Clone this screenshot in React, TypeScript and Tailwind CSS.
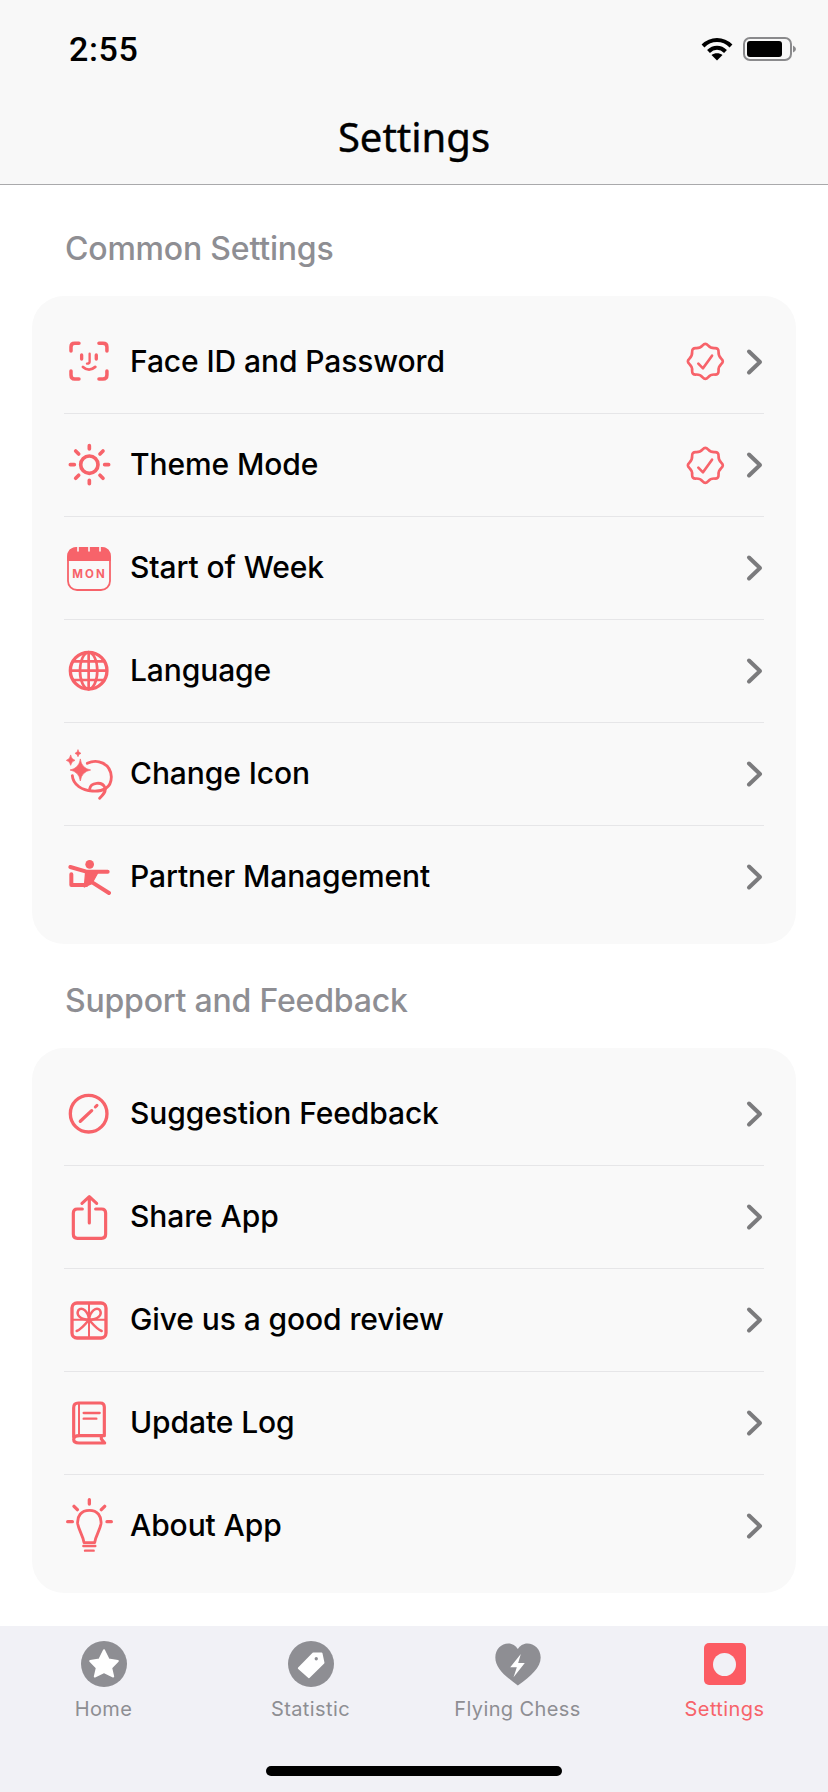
import React from "react";

const RED = "#f7636a";

function Z({ box, w, h, children }: { box: string; w: number; h: number; children: React.ReactNode }) {
  return (
    <svg width={w} height={h} viewBox={box} fill="none" stroke={RED} strokeLinecap="round" strokeLinejoin="round" className="shrink-0">
      {children}
    </svg>
  );
}

const FaceIcon = () => (
  <Z box="55 68 125 122" w={41.6} h={40.6}>
    <path strokeWidth="10.5" d="M64 98V86Q64 75 75 75H88M148 75H160Q172 75 172 86V98M172 158V170Q172 182 160 182H148M88 182H75Q64 182 64 170V158" />
    <path strokeWidth="10" d="M96 110V122M140 110V122" />
    <path d="M120 106V130Q120 136 112 136" strokeWidth="7" />
    <path d="M100 146Q118 162 137 146" strokeWidth="8.5" />
  </Z>
);

const SunIcon = () => (
  <Z box="50 370 135 130" w={45} h={43.3}>
    <g strokeWidth="11">
      <circle cx="117" cy="435" r="26" />
      <path d="M117 378V388M117 482V492M60 435H72M163 435H175M76 394L85 403M158 394L149 403M76 476L85 467M158 476L149 467" />
    </g>
  </Z>
);

const CalendarIcon = () => (
  <svg width={44} height={46} viewBox="0 0 44 46" className="shrink-0">
    <rect x="1" y="3" width="42" height="42" rx="9" fill="none" stroke={RED} strokeWidth="1.8" />
    <path d="M1 15V12Q1 3 10 3H34Q43 3 43 12V15Z" fill={RED} stroke={RED} strokeWidth="1.8" />
    <path d="M11 1V6M22 1V6M33 1V6" stroke="#f9f9f9" strokeWidth="1.6" strokeLinecap="round" />
    <text x="22.5" y="33" textAnchor="middle" fill={RED} fontSize="11.5" fontWeight="700" letterSpacing="2" fontFamily="Inter, sans-serif">MON</text>
  </svg>
);

const GlobeIcon = () => (
  <Z box="52 58 130 130" w={43.3} h={43.3}>
    <g strokeWidth="8">
      <circle cx="117" cy="123" r="55" strokeWidth="10" />
      <ellipse cx="117" cy="123" rx="26" ry="55" />
      <path d="M117 67V179M64 123H170M74 95H160M74 151H160" />
    </g>
  </Z>
);

const ChangeIcon = () => (
  <Z box="38 362 145 153" w={48.3} h={51}>
    <path d="M105 405C135 390 175 405 177 445C178 480 150 490 120 488C90 486 62 470 60 442" strokeWidth="8.5" />
    <path d="M112 482C115 462 150 458 158 478C162 490 152 500 142 510" strokeWidth="8.5" />
    <g fill={RED} stroke={RED} strokeWidth="2">
      <path d="M84 393Q88 420 115 425Q88 430 84 458Q80 430 53 425Q80 420 84 393Z" />
      <path d="M55 381Q57 393 68 396Q57 399 55 411Q53 399 42 396Q53 393 55 381Z" />
      <path d="M77 365Q78 373 86 375Q78 377 77 385Q76 377 68 375Q76 373 77 365Z" />
    </g>
  </Z>
);

const PartnerIcon = () => (
  <Z box="50 684 132 110" w={44} h={36.7}>
    <circle cx="118" cy="700" r="13" fill={RED} stroke="none" />
    <path d="M60 708L108 722H172" strokeWidth="12" />
    <path d="M106 722L142 726L124 758L102 768Z" fill={RED} stroke={RED} strokeWidth="4" />
    <path d="M63 730V762H108" strokeWidth="12" />
    <path d="M122 752L176 786" strokeWidth="12" />
  </Z>
);

const PencilIcon = () => (
  <Z box="52 40 130 130" w={43.3} h={43.3}>
    <circle cx="117" cy="105" r="55" strokeWidth="10" />
    <path d="M92 128L126 96" strokeWidth="10" />
    <path d="M137 85L142 80" strokeWidth="9" />
  </Z>
);

const ShareIcon = () => (
  <Z box="60 350 115 140" w={38.3} h={46.7}>
    <g strokeWidth="9.5">
      <path d="M97 395H82Q70 395 70 407V471Q70 483 82 483H155Q167 483 167 471V407Q167 395 155 395H137" />
      <path d="M118 437V360M96 378L118 358L140 378" />
    </g>
  </Z>
);

const GiftIcon = () => (
  <Z box="60 94 114 117" w={38} h={39}>
    <rect x="66" y="100" width="102" height="105" rx="15" strokeWidth="10" />
    <path d="M117 100V205M66 150H168" strokeWidth="6" />
    <path d="M117 150C90 150 78 135 85 122C95 108 115 125 117 150C120 125 140 108 150 122C157 135 145 150 117 150Z" strokeWidth="7.5" />
    <path d="M117 150C105 165 95 178 80 184M117 150C130 165 140 178 155 184" strokeWidth="7.5" />
  </Z>
);

const BookIcon = () => (
  <Z box="64 396 108 132" w={36} h={44}>
    <path strokeWidth="9.5" d="M72 505V416Q72 402 86 402H152Q164 402 164 414V500H90Q72 500 72 511Q72 522 88 522H165L155 510V500" />
    <path d="M88 402V498" strokeWidth="6" />
    <path d="M102 432H150M102 449H140" strokeWidth="7" />
  </Z>
);

const BulbIcon = () => (
  <Z box="44 688 146 166" w={48.7} h={55.3}>
    <path strokeWidth="10" d="M117 693V706M71 713L81 723M163 713L153 723M52 759H66M170 759H183" />
    <path d="M117 725C92 725 80 743 82 765C85 785 98 800 101 822H133C136 800 149 785 152 765C154 743 142 725 117 725Z" strokeWidth="8.5" />
    <path d="M99 832H135" strokeWidth="7" />
    <path d="M104 846H130" strokeWidth="7" />
  </Z>
);

function starPath() {
  const pts: [number, number][] = [];
  for (let i = 0; i < 16; i++) {
    const a = (i * Math.PI) / 8 - Math.PI / 2;
    const r = i % 2 === 0 ? 57 : 42;
    pts.push([133 + r * Math.cos(a), 97 + r * Math.sin(a)]);
  }
  let d = "";
  for (let i = 0; i < 16; i++) {
    const p = pts[i];
    const n = pts[(i + 1) % 16];
    const mx = (p[0] + n[0]) / 2;
    const my = (p[1] + n[1]) / 2;
    if (i === 0) d += `M${mx.toFixed(1)} ${my.toFixed(1)}`;
    else d += `Q${p[0].toFixed(1)} ${p[1].toFixed(1)} ${mx.toFixed(1)} ${my.toFixed(1)}`;
  }
  const p0 = pts[0];
  const m0 = [(p0[0] + pts[1][0]) / 2, (p0[1] + pts[1][1]) / 2];
  return `${d}Q${p0[0].toFixed(1)} ${p0[1].toFixed(1)} ${m0[0].toFixed(1)} ${m0[1].toFixed(1)}Z`;
}

const Badge = () => (
  <Z box="72 36 122 122" w={40.7} h={40.7}>
    <path d={starPath()} strokeWidth="8" />
    <path d="M112 104L126 118L153 80" strokeWidth="8" />
  </Z>
);

const Chevron = () => (
  <svg width={20} height={30} viewBox="0 0 20 30" fill="none" stroke="#7b7b7d" strokeWidth="4" strokeLinecap="round" strokeLinejoin="round" className="shrink-0">
    <path d="M5 4.5L16 15L5 25.5" />
  </svg>
);

function Row({ icon, label, badge, first }: { icon: React.ReactNode; label: string; badge?: boolean; first?: boolean }) {
  return (
    <div className={`flex h-[103px] items-center ${first ? "" : "border-t border-[#e6e6e8]"}`}>
      <div className="flex w-[50px] justify-center">{icon}</div>
      <span className="ml-[16px] flex-1 pb-[2px] text-[30px] font-medium leading-none tracking-[-0.1px] text-black">{label}</span>
      {badge && <div className="mr-[18px]"><Badge /></div>}
      <Chevron />
    </div>
  );
}

const Title = ({ children }: { children: React.ReactNode }) => (
  <div className="pl-[65px] text-[32px] font-medium leading-[36px] tracking-[-0.2px] text-[#8e8e93]">{children}</div>
);

const Card = ({ children }: { children: React.ReactNode }) => (
  <div className="mx-[32px] mt-[29px] rounded-[32px] bg-[#f9f9f9] px-[32px] pb-[16px] pt-[14px]">{children}</div>
);

function Tab({ icon, label, active }: { icon: React.ReactNode; label: string; active?: boolean }) {
  return (
    <div className="flex flex-col items-center">
      <div className="flex h-[46px] items-center justify-center">{icon}</div>
      <span className={`mt-[10px] text-[20px] font-normal leading-[24px] tracking-[0.4px] ${active ? "text-[#f7636a]" : "text-[#8e8e93]"}`}>{label}</span>
    </div>
  );
}

export default function App() {
  return (
    <div className="flex h-[1792px] w-[828px] flex-col overflow-hidden bg-white font-['Inter',sans-serif]">
      <header className="h-[185px] shrink-0 border-b border-[#a9a9ab] bg-[#f8f8f8]">
        <div className="flex h-[98px] items-center justify-between pl-[69px] pr-[32px]">
          <span className="font-['Roboto',sans-serif] text-[34px] font-medium leading-none tracking-[0.6px] text-black">2:55</span>
          <div className="flex items-center gap-[10px]">
            <svg width={32} height={24} viewBox="0 0 32 24" className="shrink-0" fill="none" stroke="#000" strokeWidth="4">
              <path d="M2 9C10 1 22 1 30 9" />
              <path d="M7.5 14.5C12.5 9.5 19.5 9.5 24.5 14.5" />
              <path d="M16 23.5L10.5 18C13.5 15.5 18.5 15.5 21.5 18Z" fill="#000" stroke="none" />
            </svg>
            <svg width={53} height={24} viewBox="0 0 53 24" className="shrink-0">
              <rect x="1" y="1" width="47" height="22" rx="6" fill="none" stroke="#8a8a8c" strokeWidth="2" />
              <rect x="4" y="4" width="35" height="16" rx="3" fill="#000" />
              <path d="M50 8.5Q53 10 53 12Q53 14 50 15.5Z" fill="#8a8a8c" />
            </svg>
          </div>
        </div>
        <div className="pt-[17px] text-center font-['Noto_Sans',sans-serif] text-[40px] font-normal leading-[44px] text-black [-webkit-text-stroke:0.4px_#000]">Settings</div>
      </header>

      <main className="flex-1 pt-[46px]">
        <Title>Common Settings</Title>
        <Card>
          <Row first icon={<FaceIcon />} label="Face ID and Password" badge />
          <Row icon={<SunIcon />} label="Theme Mode" badge />
          <Row icon={<CalendarIcon />} label="Start of Week" />
          <Row icon={<GlobeIcon />} label="Language" />
          <Row icon={<ChangeIcon />} label="Change Icon" />
          <Row icon={<PartnerIcon />} label="Partner Management" />
        </Card>
        <div className="h-[39px]" />
        <Title>Support and Feedback</Title>
        <Card>
          <Row first icon={<PencilIcon />} label="Suggestion Feedback" />
          <Row icon={<ShareIcon />} label="Share App" />
          <Row icon={<GiftIcon />} label="Give us a good review" />
          <Row icon={<BookIcon />} label="Update Log" />
          <Row icon={<BulbIcon />} label="About App" />
        </Card>
      </main>

      <nav className="relative h-[166px] shrink-0 bg-[#f1f1f6] pt-[15px]">
        <div className="grid grid-cols-4">
          <Tab
            label="Home"
            icon={
              <svg width={46} height={46} viewBox="240 122 140 140" className="shrink-0">
                <circle cx="310" cy="192" r="70" fill="#8e8e93" />
                <path d="M310 150L324 178L352 183L332 204L338 230L310 217L282 230L288 204L268 183L296 178Z" fill="#fff" stroke="#fff" strokeWidth="6" strokeLinejoin="round" />
              </svg>
            }
          />
          <Tab
            label="Statistic"
            icon={
              <svg width={46} height={46} viewBox="860 122 140 140" className="shrink-0">
                <circle cx="930" cy="192" r="70" fill="#8e8e93" />
                <path d="M962 160L968 188L924 232L893 205L937 160Z" fill="#fff" stroke="#fff" strokeWidth="6" strokeLinejoin="round" />
                <circle cx="946" cy="176" r="5" fill="#8e8e93" />
              </svg>
            }
          />
          <Tab
            label="Flying Chess"
            icon={
              <svg width={46} height={43} viewBox="242 127 139 129" className="shrink-0">
                <path d="M311 255C270 225 243 200 243 170C243 145 262 128 282 128C295 128 305 135 311 145C317 135 327 128 340 128C360 128 380 145 380 170C380 200 352 225 311 255Z" fill="#8e8e93" />
                <path d="M320 160L288 200H308L298 230L332 187H312Z" fill="#fff" />
              </svg>
            }
          />
          <Tab
            label="Settings"
            active
            icon={
              <div className="flex h-[42px] w-[42px] items-center justify-center rounded-[5px] bg-[#fc5c63]">
                <div className="h-[23px] w-[23px] rounded-full bg-[#f1f1f6]" />
              </div>
            }
          />
        </div>
        <div className="absolute left-[266px] top-[140px] h-[10px] w-[296px] rounded-full bg-black" />
      </nav>
    </div>
  );
}
